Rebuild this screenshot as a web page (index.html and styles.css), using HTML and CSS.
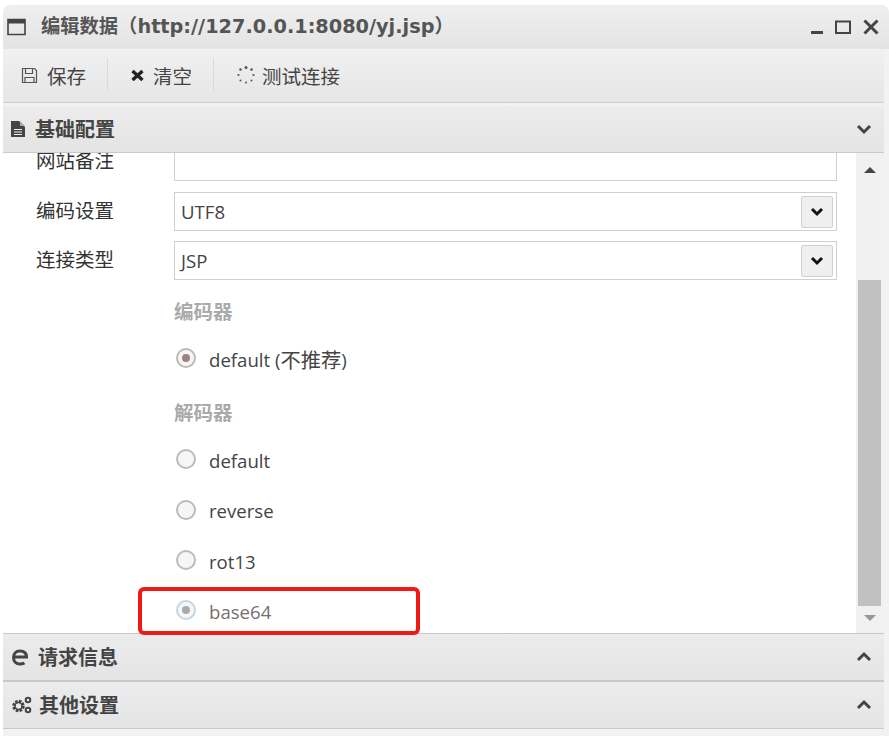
FILE: index.html
```html
<!DOCTYPE html>
<html lang="en">
<head>
    <meta charset="UTF-8">
    <meta name="viewport" content="width=device-width, initial-scale=1.0">
    <title>编辑数据</title>
    <link rel="stylesheet" href="styles.css">
</head>
<body>
    <div class="window">
        <div class="titlebar">
            <svg class="win-icon" width="20" height="20" viewBox="0 0 20 20"><path d="M1 2.500h17v15H1z" fill="none" stroke="#444" stroke-width="1.600"/><path d="M1 2h17v4.500H1z" fill="#444"/></svg>
            <span class="title">编辑数据（http://127.0.0.1:8080/yj.jsp）</span>
            <div class="win-buttons">
                <svg width="12" height="16" viewBox="0 0 12 16"><path d="M0 12h12v3H0z" fill="#444"/></svg>
                <svg width="16" height="16" viewBox="0 0 16 16"><path d="M1 2.500h14v11.500H1z" fill="none" stroke="#444" stroke-width="2"/></svg>
                <svg width="16" height="16" viewBox="0 0 16 16"><path d="M1.500 1.500l13 13M14.500 1.500l-13 13" fill="none" stroke="#444" stroke-width="3"/></svg>
            </div>
        </div>

        <div class="toolbar">
            <button class="tool tool-save">
                <svg width="17" height="17" viewBox="0 0 17 17"><path d="M1.500 1.500h12l2 2v12h-14z" fill="none" stroke="#555" stroke-width="1.200"/><path d="M4.500 1.500v5h7v-5M4 15.500v-5h9v5" fill="none" stroke="#555" stroke-width="1.200"/></svg>
                保存
            </button>
            <button class="tool tool-clear">
                <svg width="15" height="15" viewBox="0 0 15 15"><path d="M2.500 3l10 9M12.500 3l-10 9" fill="none" stroke="#222" stroke-width="3.400"/></svg>
                清空
            </button>
            <button class="tool tool-test">
                <svg width="20" height="20" viewBox="0 0 20 20" fill="#555"><circle cx="10" cy="2.500" r="1.500"/><circle cx="15.500" cy="4.500" r="1.300"/><circle cx="17.500" cy="10" r="1.100"/><circle cx="15.500" cy="15.500" r="1"/><circle cx="10" cy="17.500" r="1"/><circle cx="4.500" cy="15.500" r="1"/><circle cx="2.500" cy="10" r="1.100"/><circle cx="4.500" cy="4.500" r="1.300"/></svg>
                测试连接
            </button>
        </div>

        <div class="acc-head acc-basic">
            <svg width="16" height="18" viewBox="0 0 16 18"><path d="M1 1h8l6 6v10H1z" fill="#444"/><path d="M10 1l5 5h-5z" fill="#aaa"/><path d="M4 9.500h8M4 12h8M4 14.500h8" stroke="#eee" stroke-width="1"/></svg>
            <span>基础配置</span>
            <svg class="chev" width="16" height="12" viewBox="0 0 16 12"><path d="M2 3l6 6 6-6" fill="none" stroke="#444" stroke-width="3"/></svg>
        </div>

        <div class="acc-body">
            <div class="form-scroll">
                <div class="form">
                    <div class="row row-cut">
                        <label>网站备注</label>
                        <div class="field"></div>
                    </div>
                    <div class="row">
                        <label>编码设置</label>
                        <div class="field select">UTF8
                            <span class="select-btn"><svg width="14" height="10" viewBox="0 0 14 10"><path d="M2 2l5 5 5-5" fill="none" stroke="#111" stroke-width="3"/></svg></span>
                        </div>
                    </div>
                    <div class="row">
                        <label>连接类型</label>
                        <div class="field select">JSP
                            <span class="select-btn"><svg width="14" height="10" viewBox="0 0 14 10"><path d="M2 2l5 5 5-5" fill="none" stroke="#111" stroke-width="3"/></svg></span>
                        </div>
                    </div>
                    <div class="group-label group-first">编码器</div>
                    <div class="radio-row"><span class="radio on"></span>default (<span class="cjk">不推荐</span>)</div>
                    <div class="group-label">解码器</div>
                    <div class="radio-row"><span class="radio"></span>default</div>
                    <div class="radio-row"><span class="radio"></span>reverse</div>
                    <div class="radio-row"><span class="radio"></span>rot13</div>
                    <div class="radio-row faded"><span class="radio on blue"></span>base64</div>
                </div>
            </div>
            <div class="scrollbar">
                <svg class="arrow-up" width="14" height="8" viewBox="0 0 14 8"><path d="M1 7l6-6 6 6z" fill="#444"/></svg>
                <div class="scroll-track"><div class="scroll-thumb"></div></div>
                <svg class="arrow-down" width="14" height="8" viewBox="0 0 14 8"><path d="M1 1l6 6 6-6z" fill="#999"/></svg>
            </div>
        </div>

        <div class="acc-head acc-request">
            <svg width="18" height="18" viewBox="0 0 18 18"><path d="M3 9h12.500C15.500 5 13 3 9 3S2.500 5.500 2.500 9.500 5 16 9 16c1.800 0 3.200-.3 4.500-1" fill="none" stroke="#444" stroke-width="3"/></svg>
            <span>请求信息</span>
            <svg class="chev" width="16" height="12" viewBox="0 0 16 12"><path d="M2 9l6-6 6 6" fill="none" stroke="#444" stroke-width="3"/></svg>
        </div>
        <div class="acc-head acc-other">
            <svg width="21" height="18" viewBox="0 0 21 18"><circle cx="7.500" cy="10" r="4.500" fill="none" stroke="#444" stroke-width="3.400" stroke-dasharray="2.400 1.100"/><circle cx="7.500" cy="10" r="3.600" fill="none" stroke="#444" stroke-width="1.400"/><circle cx="17" cy="4" r="2.300" fill="none" stroke="#444" stroke-width="2"/><circle cx="17" cy="14" r="2.300" fill="none" stroke="#444" stroke-width="2"/></svg>
            <span>其他设置</span>
            <svg class="chev" width="16" height="12" viewBox="0 0 16 12"><path d="M2 9l6-6 6 6" fill="none" stroke="#444" stroke-width="3"/></svg>
        </div>

        <!-- red box drawn over the screenshot -->
        <div class="marker"></div>
    </div>
</body>
</html>
```

FILE: styles.css
```css
html, body {
    margin: 0;
    height: 100%;
    background-color: #ffffff;
    overflow: hidden;
}

body {
    padding: 5px 0 0 3px;
    box-sizing: border-box;
    font-family: "Open Sans", "Noto Sans CJK SC", sans-serif;
    font-size: 19.5px;
    color: #333;
}

.window {
    position: relative;
    height: 731px;
    display: flex;
    flex-direction: column;
    background-color: #f2f2f2;
    border-radius: 8px 8px 0 0;
}

.titlebar {
    height: 44px;
    flex: none;
    display: flex;
    align-items: center;
    padding: 0 10px 0 4px;
    background: linear-gradient(#efefef, #e4e4e4);
    border-radius: 8px 8px 0 0;
}

.win-icon {
    margin-right: 14px;
}

.title {
    font-family: "DejaVu Sans", "Noto Sans CJK SC", sans-serif;
    font-weight: bold;
    font-size: 19.3px;
    color: #555;
    flex: 1;
    position: relative;
    top: -2px;
    white-space: nowrap;
}

.win-buttons {
    display: flex;
    gap: 12px;
    align-items: center;
}

.toolbar {
    height: 53px;
    flex: none;
    margin: 1px 5px 0 0;
    padding-bottom: 2px;
    box-sizing: border-box;
    display: flex;
    align-items: center;
    background: linear-gradient(#f0f0f0, #e6e6e6);
    border-bottom: 1px solid #cfcfcf;
}

.tool {
    height: 34px;
    display: flex;
    align-items: center;
    border: none;
    border-right: 1px solid #d5dcdc;
    background: none;
    font: inherit;
    color: #444;
}

.tool-save {
    gap: 9px;
    padding: 0 21px 0 18px;
}

.tool-clear {
    gap: 8px;
    padding: 0 21px 0 22px;
}

.tool-test {
    gap: 6px;
    padding: 0 0 0 22px;
    border-right: none;
}

.acc-head {
    flex: none;
    margin-right: 5px;
    box-sizing: border-box;
    display: flex;
    align-items: center;
    padding: 0 12px 0 8px;
    background: linear-gradient(#ececec, #e4e4e4);
    border-bottom: 1px solid #c9c9c9;
    font-size: 20px;
    font-weight: bold;
    color: #444;
}

.acc-head span {
    flex: 1;
    padding-bottom: 2px;
}

.acc-basic {
    margin-top: 3px;
    height: 47px;
    padding-left: 7px;
    gap: 9px;
}

.acc-request {
    height: 49px;
    gap: 9px;
    border-top: 1px solid #c9c9c9;
    border-bottom-width: 2px;
}

.acc-other {
    height: 47px;
    gap: 7px;
}

.acc-body {
    height: 480px;
    flex: none;
    margin-right: 5px;
    display: flex;
    background-color: #ffffff;
}

.form-scroll {
    flex: 1;
    overflow: hidden;
}

.form {
    margin-top: -11px;
    padding: 0 19px 0 33px;
}

.row {
    display: flex;
    align-items: center;
    margin-bottom: 10px;
}

.row-cut {
    margin-bottom: 11px;
}

.row label {
    width: 138px;
    flex: none;
    padding-bottom: 4px;
}

.field {
    flex: 1;
    height: 39px;
    box-sizing: border-box;
    border: 1px solid #cfcfcf;
    background-color: #ffffff;
}

.select {
    display: flex;
    align-items: center;
    justify-content: space-between;
    padding: 0 3px 0 6px;
    font-size: 18.6px;
    color: #444;
}

.select-btn {
    width: 32px;
    height: 32px;
    display: flex;
    align-items: center;
    justify-content: center;
    background-color: #efefef;
    border: 1px solid #d0d0d0;
    border-radius: 2px;
    box-sizing: border-box;
}

.group-label {
    margin: 14px 0 0 138px;
    height: 37px;
    line-height: 29px;
    font-weight: bold;
    color: #aaa;
}

.group-first {
    margin-top: 17px;
}

.radio-row {
    display: flex;
    align-items: center;
    height: 50.300px;
    margin-left: 138px;
    font-size: 18.6px;
    color: #444;
    white-space: pre;
}

.cjk {
    font-size: 20.3px;
}

.radio {
    width: 20px;
    height: 20px;
    box-sizing: border-box;
    margin: 0 13px 0 2px;
    border: 2px solid #bbb;
    border-radius: 50%;
    background-color: #f6f6f6;
    position: relative;
    top: -1px;
}

.radio.on::after {
    content: "";
    position: absolute;
    left: 4px;
    top: 4px;
    width: 8px;
    height: 8px;
    border-radius: 50%;
    background-color: #a08080;
}

.radio.blue {
    border-color: #c3d6e4;
}

.radio.blue::after {
    background-color: #aaa;
}

.faded {
    color: #776f6f;
}

.marker {
    position: absolute;
    left: 135px;
    top: 582px;
    width: 282px;
    height: 48px;
    box-sizing: border-box;
    border: 4px solid #f01a14;
    border-radius: 6px;
}

.scrollbar {
    width: 28px;
    flex: none;
    display: flex;
    flex-direction: column;
    align-items: center;
    background-color: #f1f1f1;
}

.scrollbar svg {
    flex: none;
}

.arrow-up {
    margin: 13px 0 11px;
}

.arrow-down {
    margin: 8px 0 11px;
}

.scroll-track {
    flex: 1;
    width: 100%;
    padding: 0 3px 0 2px;
    box-sizing: border-box;
    display: flex;
}

.scroll-thumb {
    width: 100%;
    margin-top: 95px;
    background-color: #c1c1c1;
}
```
